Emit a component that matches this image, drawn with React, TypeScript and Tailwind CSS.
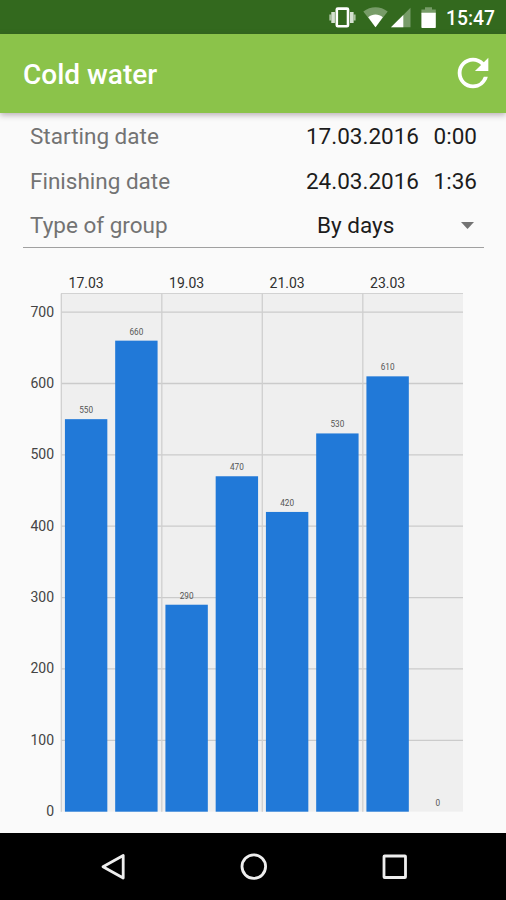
import { MdRefresh } from "react-icons/md";

const readings = [
  { day: "17.03", value: 550 },
  { day: "18.03", value: 660 },
  { day: "19.03", value: 290 },
  { day: "20.03", value: 470 },
  { day: "21.03", value: 420 },
  { day: "22.03", value: 530 },
  { day: "23.03", value: 610 },
  { day: "24.03", value: 0 },
];

const ticks = [0, 100, 200, 300, 400, 500, 600, 700];

// plot area, in px of the chart svg
const LEFT = 61;
const RIGHT = 463;
const TOP = 33.5;
const BOTTOM = 551.7;
const STEP = (RIGHT - LEFT) / readings.length;
const BAR = 42.4;

const yOf = (value: number) => BOTTOM - value * 0.7137;

const StatusBar = () => (
  <div className="flex h-[34px] items-center justify-end bg-[#33691e] pr-[11px] text-white">
    {/* Vibrate, wifi, signal, battery */}
    <svg className="mr-[7px] h-[34px] w-[27px]" viewBox="0 0 27 34" aria-hidden="true">
      <path d="M0.3 14.5h2v6h-2zM24.6 14.5h2v6h-2z" fill="#a9c19f" />
      <path d="M2.3 12h3.6v11H2.3zM21 12h3.6v11H21z" fill="#d5e1d0" />
      <rect x="7.8" y="8.6" width="11.2" height="17.6" rx="1" fill="none" stroke="#fff" strokeWidth="2.6" />
    </svg>
    <svg className="mr-[3px] h-[34px] w-[25px]" viewBox="0 0 25 34" aria-hidden="true">
      <path d="M12.5 27.3 0.3 11.6C7.5 5.8 17.5 5.8 24.7 11.6z" fill="#779c68" />
      <path d="M12.5 27.3 5.2 17.2C9.5 13.7 15.5 13.7 19.8 17.2z" fill="#fff" />
    </svg>
    <svg className="mr-[10px] h-[34px] w-5" viewBox="0 0 20 34" aria-hidden="true">
      <path d="M0 27.2 19.5 7.7V27.2z" fill="#779c68" />
      <path d="M0 27.2 12.3 14.9V27.2z" fill="#fff" />
    </svg>
    <svg className="mr-2.5 h-[34px] w-[15px]" viewBox="0 0 15 34" aria-hidden="true">
      <path d="M4 7.3h7v2.2h3.8v4H0.4v-4H4z" fill="#779c68" />
      <path d="M0.4 12.7h14.4v14.6q0 .7-.7.7H1.1q-.7 0-.7-.7z" fill="#fff" />
    </svg>
    <span className="pt-[3px] text-[19.3px] leading-none font-medium">15:47</span>
  </div>
);

const AppBar = () => (
  <header className="relative flex h-[79px] items-center justify-between bg-[#8bc34a] pr-[10px] pl-[23px] text-white shadow-[0_2px_6px_rgba(60,30,50,0.35)]">
    <h1 className="pt-1 text-[28px] leading-none font-medium">Cold water</h1>
    <button type="button" aria-label="Refresh">
      <MdRefresh className="size-[46px]" />
    </button>
  </header>
);

const DateRow = ({ label, date, time }: { label: string; date: string; time: string }) => (
  <div className="flex h-[44.6px] items-center pr-[7px] pl-[7px]">
    <span className="flex-1 text-[#737373]">{label}</span>
    <span className="text-[#1c1c1c]">{date}</span>
    <span className="w-[58px] text-right text-[#1c1c1c]">{time}</span>
  </div>
);

const Chart = () => (
  <svg className="h-[573px] w-[506px]" viewBox="0 0 506 573">
    <rect x={LEFT} y={TOP} width={RIGHT - LEFT} height={BOTTOM - TOP} fill="#efefef" />
    <path d={`M${LEFT} ${TOP}H${RIGHT}`} stroke="#d2d2d2" />

    {ticks.map((tick) => (
      <g key={tick}>
        {tick > 0 ? (
          <path d={`M${LEFT} ${yOf(tick)}H${RIGHT}`} stroke="#cbcbcb" strokeWidth="1.3" />
        ) : null}
        <text x="54" y={yOf(tick) + 4.5} textAnchor="end" fontSize="14" fill="#444">
          {tick}
        </text>
      </g>
    ))}

    {readings.map(({ day, value }, i) => {
      const center = LEFT + STEP * (i + 0.5);
      return (
        <g key={day}>
          {i % 2 === 0 ? (
            <>
              <path
                d={`M${LEFT + STEP * i + 0.3} ${TOP}V${BOTTOM}`}
                stroke="#cfcfcf"
                strokeWidth="1.3"
              />
              <text x={center} y="28" textAnchor="middle" fontSize="14" fill="#303030">
                {day}
              </text>
            </>
          ) : null}
          <rect
            x={center - BAR / 2}
            y={yOf(value)}
            width={BAR}
            height={BOTTOM - yOf(value)}
            fill="#2179d8"
          />
          <text x={center} y={yOf(value) - 6} textAnchor="middle" fontSize="8.2" fill="#555">
            {value}
          </text>
        </g>
      );
    })}
  </svg>
);

const NavBar = () => (
  <nav className="flex h-[67px] items-center justify-center gap-[113px] bg-black pl-px">
    <svg className="size-7" viewBox="0 0 28 28" fill="none" stroke="#eee" strokeWidth="2.8">
      <path d="M24.2 2.5V25L4 13.7z" strokeLinejoin="round" />
    </svg>
    <svg className="size-7" viewBox="0 0 28 28" fill="none" stroke="#eee" strokeWidth="2.8">
      <circle cx="13.8" cy="13.6" r="11.8" />
    </svg>
    <svg className="size-7" viewBox="0 0 28 28" fill="none" stroke="#eee" strokeWidth="2.8">
      <rect x="3" y="3" width="21.5" height="21.5" rx="0.6" />
    </svg>
  </nav>
);

const App = () => (
  <div className="flex h-[900px] w-[506px] flex-col overflow-hidden bg-[#fafafa] font-[Roboto,sans-serif]">
    <StatusBar />
    <AppBar />
    <main className="flex-1">
      <section className="mr-[22px] ml-[23px] border-b-[1.5px] border-[#a0a0a0] pt-[1px] text-[22.5px] leading-none">
        <DateRow label="Starting date" date="17.03.2016" time="0:00" />
        <DateRow label="Finishing date" date="24.03.2016" time="1:36" />
        <div className="flex h-[44px] items-center pr-[10px] pl-[7px]">
          <span className="w-[287px] text-[#737373]">Type of group</span>
          <span className="flex-1 text-[#1c1c1c]">By days</span>
          <svg className="h-[7px] w-[13px]" viewBox="0 0 13 7" aria-hidden="true">
            <path d="M0 0h13L6.5 7z" fill="#737373" />
          </svg>
        </div>
      </section>
      <div className="pt-3">
        <Chart />
      </div>
    </main>
    <NavBar />
  </div>
);

export default App;
